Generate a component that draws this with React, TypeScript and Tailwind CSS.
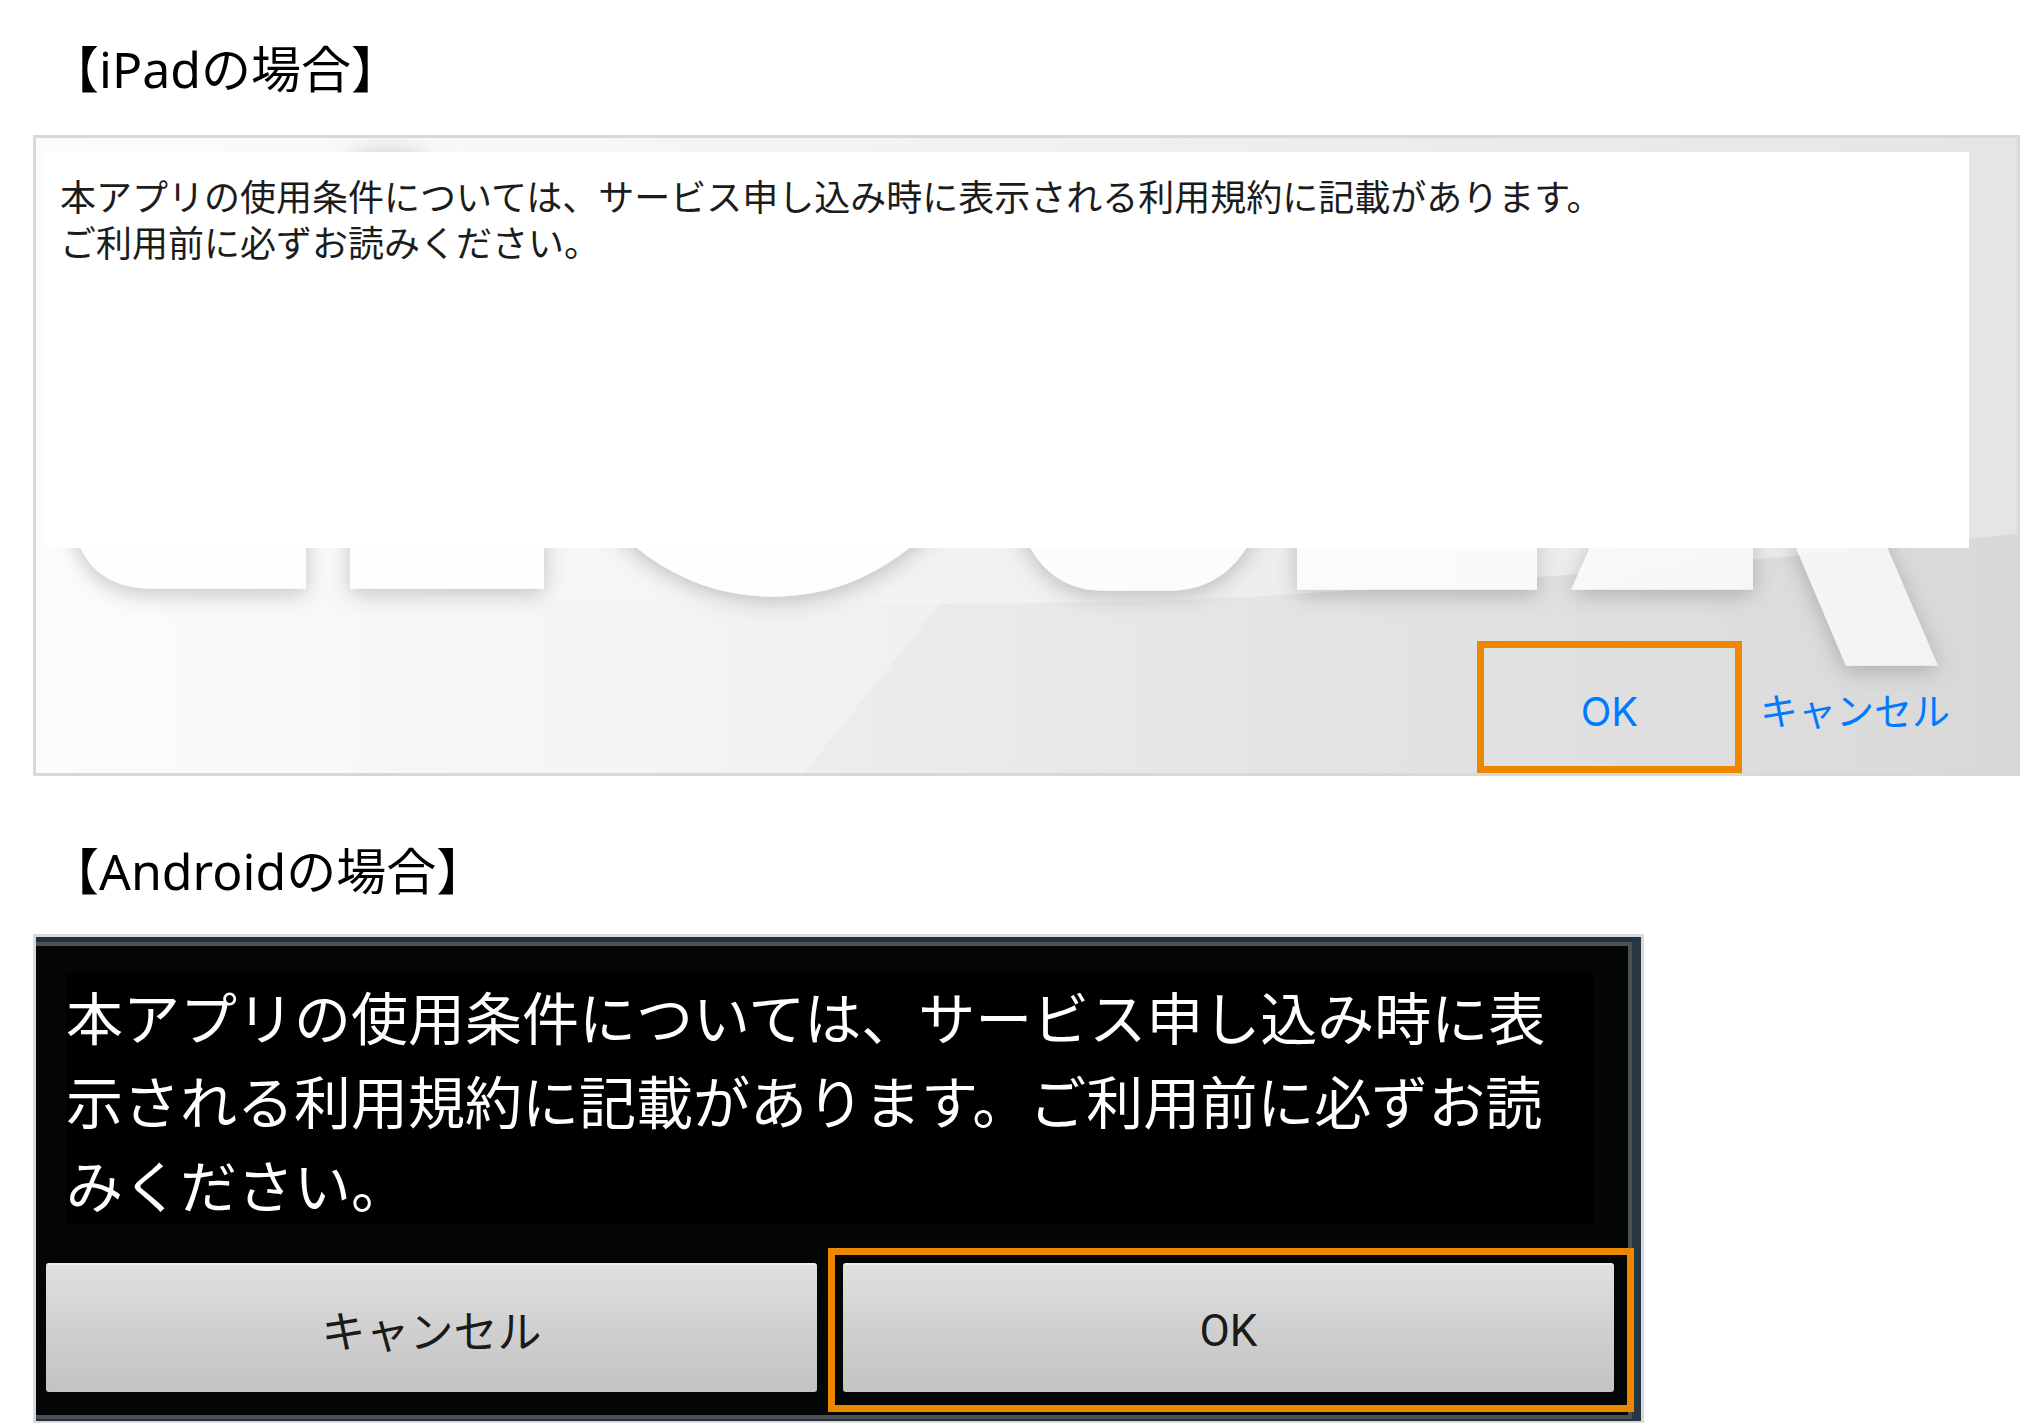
import type { ReactNode } from "react";

const TERMS_FIRST = "本アプリの使用条件については、サービス申し込み時に表示される利用規約に記載があります。";
const TERMS_SECOND = "ご利用前に必ずお読みください。";

function SectionTitle({ children }: { children: ReactNode }) {
  return (
    <h2 className="pl-4 font-['Noto_Sans','Noto_Sans_CJK_JP',sans-serif] text-[50px] leading-[60px] text-black">
      {children}
    </h2>
  );
}

function LogoBackdrop() {
  return (
    <svg
      className="absolute inset-0 h-full w-full"
      viewBox="36 138 1981 634"
      preserveAspectRatio="none"
      aria-hidden="true"
    >
      <defs>
        <linearGradient id="upper" x1="0" x2="1" y1="0" y2="0">
          <stop offset="0" stopColor="#fcfcfc" />
          <stop offset="0.3" stopColor="#f6f6f6" />
          <stop offset="0.7" stopColor="#ececec" />
          <stop offset="1" stopColor="#e5e5e5" />
        </linearGradient>
        <linearGradient id="lower" gradientUnits="userSpaceOnUse" x1="36" x2="2017" y1="0" y2="0">
          <stop offset="0" stopColor="#fcfcfc" />
          <stop offset="0.15" stopColor="#f8f8f8" />
          <stop offset="0.35" stopColor="#f3f3f4" />
          <stop offset="0.45" stopColor="#eff0f2" />
        </linearGradient>
        <linearGradient id="shade" gradientUnits="userSpaceOnUse" x1="804" x2="2017" y1="0" y2="0">
          <stop offset="0" stopColor="#ededee" />
          <stop offset="0.15" stopColor="#e9eaea" />
          <stop offset="0.4" stopColor="#e4e4e4" />
          <stop offset="0.75" stopColor="#dedede" />
          <stop offset="1" stopColor="#d8d8d8" />
        </linearGradient>
        <linearGradient id="letters" gradientUnits="userSpaceOnUse" x1="770" x2="1940" y1="0" y2="0">
          <stop offset="0" stopColor="#fefefe" />
          <stop offset="0.6" stopColor="#fafafa" />
          <stop offset="1" stopColor="#f3f3f5" />
        </linearGradient>
        <filter id="soft" filterUnits="userSpaceOnUse" x="36" y="138" width="1981" height="634">
          <feDropShadow dx="0" dy="5" stdDeviation="11" floodColor="#000" floodOpacity="0.22" />
        </filter>
        <filter id="haze" filterUnits="userSpaceOnUse" x="36" y="138" width="1981" height="634">
          <feGaussianBlur stdDeviation="11" />
        </filter>
      </defs>
      <rect x="36" y="138" width="1981" height="634" fill="url(#upper)" />
      <path d="M36 588 Q300 598 600 601 T940 603 L804 772 H36Z" fill="url(#lower)" />
      <path d="M940 603 Q1180 602 1297 593 C1540 578 1800 556 2017 533 V772 H804Z" fill="url(#shade)" />
      <ellipse cx="388" cy="168" rx="42" ry="18" fill="#cfcfcf" filter="url(#haze)" />
      <g fill="url(#letters)" filter="url(#soft)">
        <path d="M74 530 Q90 588 152 588 H306 V500 H74Z" />
        <path d="M350 500 H544 V588 H350Z" />
        <circle cx="773" cy="382" r="214" />
        <path d="M1022 530 Q1046 590 1103 590 H1170 Q1228 590 1256 530 V500 H1022Z" />
        <path d="M1297 500 H1537 V589 H1297Z" />
        <path d="M1611 500 L1571 589 H1753 V500Z" />
        <path d="M1776 500 L1846 665 H1938 L1867 500Z" />
      </g>
      <path d="M1297 593 C1530 578 1750 562 1969 539 V500 H1297Z" fill="#fff" fillOpacity="0.15" />
    </svg>
  );
}

function IpadDialog() {
  return (
    <section className="relative border-[3px] border-[#d8d8d8]">
      <LogoBackdrop />
      <div className="relative flex flex-col pt-[14px]">
        <div className="mr-12 ml-[10px] min-h-[396px] bg-white px-[14px] pt-5 font-['Noto_Sans_CJK_JP',sans-serif] text-[36px] leading-[46px] text-[#1c1c1c]">
          <p>{TERMS_FIRST}</p>
          <p>{TERMS_SECOND}</p>
        </div>
        <div className="mt-[93px] flex h-[132px] justify-end pr-[67px] text-[38px] leading-[48px] text-[#007aff]">
          <button
            type="button"
            className="w-[265px] border-[7px] border-[#ee8700] pt-[10px] font-['Inter','Liberation_Sans',sans-serif] text-[40px]"
          >
            OK
          </button>
          <button type="button" className="pt-1 pl-[18px] font-['Noto_Sans_CJK_JP',sans-serif]">
            キャンセル
          </button>
        </div>
      </div>
    </section>
  );
}

const androidButton =
  "h-[129px] w-full rounded-[3px] border-t-2 border-[#eeefee] bg-linear-to-b from-[#dfe0df] via-[#d0d0d0] to-[#c2c3c2] text-[44px] leading-[56px] text-[#1a1a1a]";

function AndroidDialog() {
  return (
    <section className="w-full max-w-[1611px] border-[3px] border-[#d8d9da] bg-[#263642]">
      <div className="mr-[9px] border-t-[5px] border-b-2 border-[#22303b]">
        <div className="border-y-4 border-r-4 border-[#4d5052] bg-[#040606]">
          <div className="pt-[27px] pr-[34px] pl-[30px]">
            <p className="bg-black font-['Noto_Sans_CJK_JP',sans-serif] text-[57px] leading-[84px] text-white">
              {TERMS_FIRST}
              {TERMS_SECOND}
            </p>
          </div>
          <div className="mt-[23px] -mr-[6px] flex justify-between gap-[11px] pb-[3px] pl-[10px]">
            <div className="flex-1 pt-[15px]">
              <button type="button" className={`${androidButton} font-['Noto_Sans_CJK_JP',sans-serif]`}>
                キャンセル
              </button>
            </div>
            <div className="flex-[0_0_806px] border-[7px] border-[#ee8700] pt-2 pr-[13px] pb-[13px] pl-2">
              <button type="button" className={`${androidButton} pt-1 font-['Roboto',sans-serif]`}>
                OK
              </button>
            </div>
          </div>
        </div>
      </div>
    </section>
  );
}

export default function App() {
  return (
    <main className="bg-white pt-[39px] pl-[33px]">
      <SectionTitle>【iPadの場合】</SectionTitle>
      <div className="mt-9">
        <IpadDialog />
      </div>
      <div className="mt-[65px] mb-[33px]">
        <SectionTitle>【Androidの場合】</SectionTitle>
      </div>
      <AndroidDialog />
    </main>
  );
}
